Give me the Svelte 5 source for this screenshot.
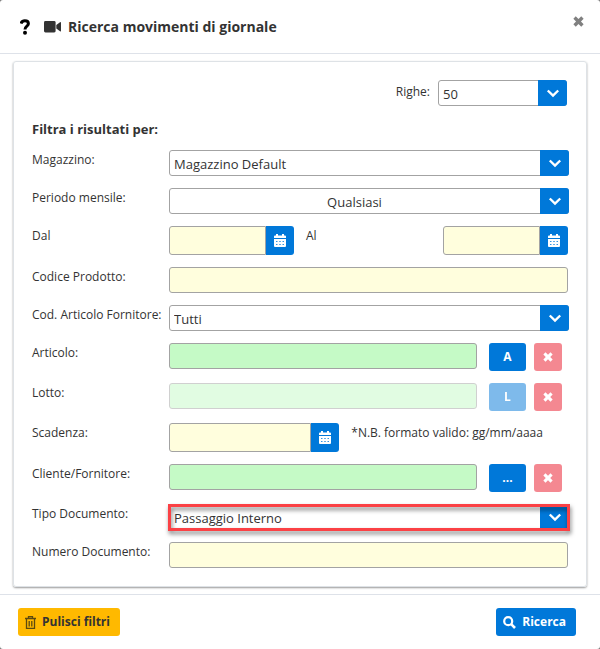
<script>
  let rows = $state("50");
  let warehouse = $state("Magazzino Default");
  let period = $state("Qualsiasi");
  let supplierCode = $state("Tutti");
  let docType = $state("Passaggio Interno");

  const docTypes = ["Passaggio Interno", "Carico", "Scarico"];

  function clearFilters() {
    warehouse = "Magazzino Default";
    period = "Qualsiasi";
    supplierCode = "Tutti";
    docType = "Passaggio Interno";
  }
</script>

{#snippet chevron()}
  <span class="chevron">
    <svg width="14" height="14" viewBox="0 0 14 14" fill="none">
      <path d="M1.8 4.5L7 9.5L12.2 4.5" stroke="#fff" stroke-width="2.4" />
    </svg>
  </span>
{/snippet}

{#snippet cross(size)}
  <svg width={size} height={size} viewBox="0 0 12 12">
    <path
      d="M3 .4L6 3.3L9 .4L11.6 3L8.7 6L11.6 9L9 11.6L6 8.7L3 11.6L.4 9L3.3 6L.4 3Z"
      fill="currentColor"
    />
  </svg>
{/snippet}

{#snippet dateField(id, label)}
  <div class="date">
    <input {id} type="text" aria-label={label} />
    <button type="button" class="primary" aria-label="Calendario">
      <svg width="12" height="13" viewBox="0 0 12 13">
        <path
          fill="#fff"
          fill-rule="evenodd"
          d="M2 0H4V1.5H8V0H10V1.5H11Q12 1.5 12 2.5V4H0V2.5Q0 1.5 1 1.5H2ZM0 5H12V12Q12 13 11 13H1Q0 13 0 12ZM2.2 7V8H3.4V7ZM5.4 7V8H6.6V7ZM8.6 7V8H9.8V7ZM2.2 10V11H3.4V10ZM5.4 10V11H6.6V10ZM8.6 10V11H9.8V10Z"
        />
      </svg>
    </button>
  </div>
{/snippet}

{#snippet lookup(id, text, disabled)}
  <div class="lookup">
    <input {id} type="text" class="green" {disabled} />
    <button type="button" class="primary pick" {disabled}>{text}</button>
    <button type="button" class="remove" disabled aria-label="Rimuovi">
      {@render cross(10)}
    </button>
  </div>
{/snippet}

<div class="modal">
  <header>
    <svg width="10" height="16" viewBox="0 0 10 16">
      <path
        d="M1 4.6C1.6 2.7 2.8 1.8 4.8 1.8C7.1 1.8 8.4 3 8.4 4.7C8.4 7.2 5 7 5 10.4"
        fill="none"
        stroke="#000"
        stroke-width="3"
      />
      <circle cx="5" cy="13.8" r="2" />
    </svg>
    <svg class="camera" width="18" height="12" viewBox="0 0 18 12">
      <rect width="11.6" height="11.4" rx="1.4" fill="#333" />
      <path d="M12.3 4L16 1.2Q17 .7 17 1.8V9.7Q17 10.8 16 10.2L12.3 7.5Z" fill="#333" />
    </svg>
    <h1>Ricerca movimenti di giornale</h1>
    <button type="button" class="close" aria-label="Chiudi">
      {@render cross(11)}
    </button>
  </header>

  <main>
    <div class="card">
      <div class="top">
        <label for="righe">Righe:</label>
        <div class="select">
          <select id="righe" bind:value={rows}>
            <option>50</option>
            <option>100</option>
          </select>
          {@render chevron()}
        </div>
      </div>

      <h2>Filtra i risultati per:</h2>

      <div class="filters">
        <label for="magazzino">Magazzino:</label>
        <div class="select wide">
          <select id="magazzino" bind:value={warehouse}>
            <option>Magazzino Default</option>
          </select>
          {@render chevron()}
        </div>

        <label for="periodo">Periodo mensile:</label>
        <div class="select wide">
          <select id="periodo" class="centered" bind:value={period}>
            <option>Qualsiasi</option>
          </select>
          {@render chevron()}
        </div>

        <label for="dal">Dal</label>
        <div class="range">
          {@render dateField("dal", "Dal")}
          <label for="al">Al</label>
          {@render dateField("al", "Al")}
        </div>

        <label for="codice">Codice Prodotto:</label>
        <input id="codice" type="text" />

        <label for="fornitore">Cod. Articolo Fornitore:</label>
        <div class="select wide">
          <select id="fornitore" bind:value={supplierCode}>
            <option>Tutti</option>
          </select>
          {@render chevron()}
        </div>

        <label for="articolo">Articolo:</label>
        {@render lookup("articolo", "A", false)}

        <label for="lotto">Lotto:</label>
        {@render lookup("lotto", "L", true)}

        <label for="scadenza">Scadenza:</label>
        <div class="expiry">
          {@render dateField("scadenza", "Scadenza")}
          <span class="note">*N.B. formato valido: gg/mm/aaaa</span>
        </div>

        <label for="cliente">Cliente/Fornitore:</label>
        {@render lookup("cliente", "...", false)}

        <label for="tipo">Tipo Documento:</label>
        <div class="select wide highlight">
          <select id="tipo" bind:value={docType}>
            {#each docTypes as type}
              <option>{type}</option>
            {/each}
          </select>
          {@render chevron()}
        </div>

        <label for="numero">Numero Documento:</label>
        <input id="numero" type="text" />
      </div>
    </div>
  </main>

  <footer>
    <button type="button" class="warning" onclick={clearFilters}>
      <svg width="11" height="13" viewBox="0 0 11 13" fill="none" stroke="#5b4a10">
        <path
          d="M0 2.5H11M3.5 2.5V.7H7.5V2.5M1.5 3V12.3H9.5V3M4.2 5V10.5M6.8 5V10.5"
          stroke-width="1.3"
        />
      </svg>
      Pulisci filtri
    </button>
    <button type="submit" class="primary">
      <svg width="13" height="13" viewBox="0 0 13 13" fill="none" stroke="#fff">
        <circle cx="5.2" cy="5.2" r="4" stroke-width="2.2" />
        <path d="M8.2 8.2L12 12" stroke-width="2.6" />
      </svg>
      Ricerca
    </button>
  </footer>
</div>

<style>
  :global(body) {
    margin: 0;
    background: #777;
  }
  .modal {
    display: flex;
    flex-direction: column;
    min-height: 100vh;
    background: #fff;
    border-radius: 3px;
    color: #333;
    font-family: "Open Sans", "Noto Sans", sans-serif;
    font-size: 12px;
    line-height: 18px;
  }
  .modal * {
    box-sizing: border-box;
  }
  header {
    display: flex;
    align-items: center;
    height: 54px;
    padding: 0 16px 0 20px;
    border-bottom: 1px solid #dee2e9;
  }
  .camera {
    margin: 0 6px 0 14px;
  }
  h1 {
    flex: 1;
    margin: 0;
    font-size: 14px;
    font-weight: 700;
  }
  .close {
    align-self: flex-start;
    height: 12px;
    margin-top: 15px;
    background: none;
    color: #808080;
  }
  main {
    flex: 1;
    padding: 7px 13px;
  }
  .card {
    padding: 18px;
    border: 1px solid #dee2e6;
    border-radius: 3px;
    box-shadow: 0 1px 2px rgba(0, 0, 0, 0.4);
  }
  .top {
    display: flex;
    justify-content: flex-end;
    gap: 8px;
    padding: 0 1px;
  }
  .top label {
    margin-top: 3px;
  }
  .top .select {
    width: 157px;
  }
  h2 {
    margin: 14px 0 12px;
    font-size: 13px;
    line-height: 18px;
    font-weight: 700;
  }
  .filters {
    display: grid;
    grid-template-columns: 125px 1fr;
    gap: 12px;
  }
  label,
  .note {
    white-space: nowrap;
  }
  .filters label,
  .note {
    padding-top: 1px;
  }
  input,
  select {
    width: 100%;
    min-width: 0;
    height: 26px;
    margin: 0;
    padding: 0 4px;
    border: 1px solid #a3a3a3;
    border-radius: 3px;
    background: #fffedd;
    color: #333;
    font: inherit;
    font-size: 13px;
  }
  select {
    grid-area: 1 / 1;
    padding: 2px 33px 0 4px;
    background: #fff;
    appearance: none;
  }
  .centered {
    text-align-last: center;
  }
  .green {
    background: #c5fac6;
  }
  .select {
    display: grid;
    height: 26px;
  }
  .top .select {
    width: 129px;
  }
  .wide {
    margin-right: -1px;
  }
  .chevron {
    grid-area: 1 / 1;
    justify-self: end;
    display: flex;
    align-items: center;
    justify-content: center;
    width: 29px;
    height: 26px;
    background: #0078d9;
    border-radius: 0 3px 3px 0;
    pointer-events: none;
  }
  .highlight {
    position: relative;
  }
  .highlight::after {
    content: "";
    position: absolute;
    inset: 0 -1px -1px;
    border: 3px solid #fb4145;
    filter: drop-shadow(1px 3px 2px rgba(0, 0, 0, 0.5));
    pointer-events: none;
  }
  button {
    display: flex;
    align-items: center;
    justify-content: center;
    height: 28px;
    padding: 0;
    border: 0;
    border-radius: 3px;
    font: inherit;
    font-weight: 700;
    cursor: pointer;
  }
  input:disabled,
  button:disabled {
    opacity: 0.5;
  }
  .primary {
    background: #0078d9;
    color: #fff;
  }
  .date {
    display: flex;
  }
  .date input {
    flex: 1;
    height: 29px;
    border-radius: 3px 0 0 3px;
  }
  .date button {
    width: 28px;
    height: 29px;
    border-radius: 0 3px 3px 0;
  }
  .range {
    display: grid;
    grid-template-columns: repeat(3, 1fr);
    gap: 12px;
  }
  .expiry {
    display: grid;
    grid-template-columns: 11fr 14fr;
    gap: 12px;
  }
  .lookup {
    display: flex;
    padding-right: 6px;
  }
  .lookup input {
    flex: 1;
  }
  .pick {
    width: 37px;
    margin: 0 8px 0 12px;
  }
  .remove {
    width: 28px;
    background: #eb1326;
    color: #fff;
  }
  footer {
    display: flex;
    justify-content: space-between;
    padding: 13px 24px 13px 18px;
    border-top: 1px solid #dee2e9;
  }
  footer button {
    gap: 6px;
    padding: 0 10px 0 7px;
  }
  .warning {
    background: #ffb900;
    color: #333;
  }
</style>
